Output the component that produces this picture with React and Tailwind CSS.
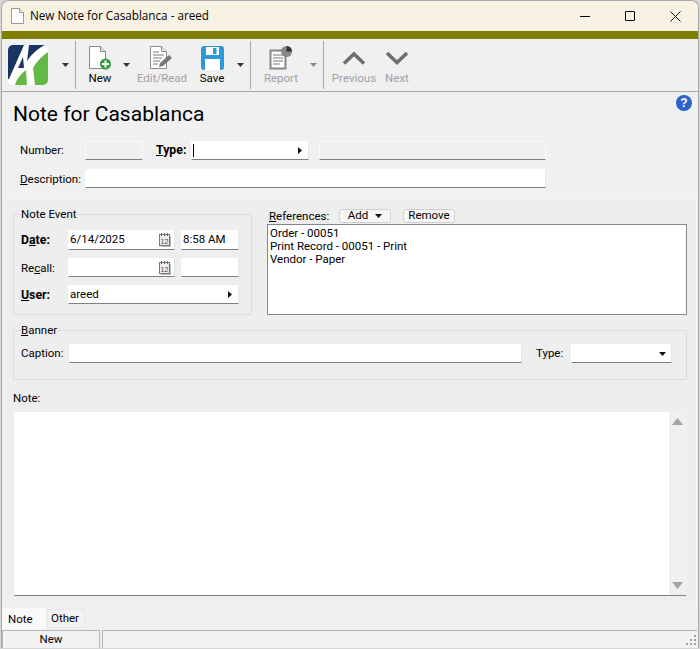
const Caret = ({ color = '#333' }) => (
  <svg width="7" height="4" viewBox="0 0 7 4">
    <path d="M0 0h7L3.500 4z" fill={color} />
  </svg>
);

const RightCaret = () => (
  <svg width="4" height="7" viewBox="0 0 4 7">
    <path d="M0 0l4 3.500L0 7z" fill="#111" />
  </svg>
);

const Logo = () => (
  <svg width="40" height="40" viewBox="0 0 40 40">
    <clipPath id="logoClip">
      <rect width="40" height="40" rx="5" />
    </clipPath>
    <g clipPath="url(#logoClip)">
      <rect width="40" height="40" fill="#fff" />
      <path d="M0 0h16L1 34H0z" fill="#1c3461" />
      <path d="M21 0h16C29 4 24 9 19 16z" fill="#1c3461" />
      <path d="M10 23l5-11 1 11z" fill="#1c3461" />
      <path d="M40 7C33 12 28 17 25 23l2 17h13z" fill="#63b946" />
      <path d="M7 40c2-7 6-11 11-15l1 15z" fill="#63b946" />
    </g>
  </svg>
);

const NewIcon = () => (
  <svg width="24" height="26" viewBox="0 0 24 26">
    <path d="M1.500 1.500h11l5 5v17h-16z" fill="#fff" stroke="#8a8a8a" />
    <path d="M12.500 1.500v5h5" fill="#e8e8e8" stroke="#8a8a8a" />
    <circle cx="17.500" cy="19" r="5.500" fill="#2f9e44" />
    <path d="M17.500 15.500v7M14 19h7" stroke="#fff" strokeWidth="2" />
  </svg>
);

const EditIcon = () => (
  <svg width="26" height="26" viewBox="0 0 26 26">
    <path d="M1.500 1.500h11l5 5v17h-16z" fill="#fff" stroke="#8a8a8a" />
    <path d="M12.500 1.500v5h5" fill="#eee" stroke="#8a8a8a" />
    <path d="M4 7h6M4 10h11M4 13h9M4 16h7M4 19h5" stroke="#777" />
    <path d="M10 22l1-4 9-8 3 3-9 8z" fill="#777" />
  </svg>
);

const SaveIcon = () => (
  <svg width="23" height="24" viewBox="0 0 23 24">
    <rect width="23" height="24" rx="3" fill="#2a9ad9" />
    <rect x="5" y="1" width="13" height="8" fill="#fff" />
    <rect x="12" y="2" width="3.500" height="6" fill="#2a9ad9" />
    <rect x="4" y="13" width="15" height="11" fill="#fff" />
  </svg>
);

const ReportIcon = () => (
  <svg width="25" height="26" viewBox="0 0 25 26">
    <rect x="1.500" y="5.500" width="15" height="18" fill="#fff" stroke="#888" strokeWidth="2" />
    <path d="M4 10h10M4 13h10M4 16h10M4 19h7" stroke="#777" />
    <circle cx="17.500" cy="6.500" r="5.500" fill="#888" />
    <path d="M17.500 1a5.500 5.500 0 0 1 5.500 5.500h-5.500z" fill="#333" />
  </svg>
);

const Chevron = ({ up }) => (
  <svg width="24" height="14" viewBox="0 0 24 14">
    <path d={up ? 'M2 12.500L12 3l10 9.500' : 'M2 2l10 9.500L22 2'} fill="none" stroke="#6e6e6e" strokeWidth="3.500" />
  </svg>
);

const CalendarIcon = () => (
  <svg width="12" height="14" viewBox="0 0 12 14" className="shrink-0">
    <rect x="0.500" y="1.500" width="10" height="11" fill="#eee" stroke="#777" />
    <path d="M2.500 0v3M5.500 0v3M8.500 0v3" stroke="#666" />
    <path d="M11.500 3v10.500H2" fill="none" stroke="#bbb" />
    <text x="5.500" y="11" textAnchor="middle" fontSize="7" fill="#444" fontFamily="Liberation Sans">12</text>
  </svg>
);

const ToolButton = ({ icon, label, width, className = '', disabled }) => (
  <div className={`flex flex-col items-center pt-[6px] ${className}`} style={{ width }}>
    <div className="h-[26px] flex items-center justify-center">{icon}</div>
    <div className={`h-[14px] leading-[14px] whitespace-nowrap ${disabled ? 'text-[#a0a0a0]' : 'text-black'}`}>{label}</div>
  </div>
);

const ToolCaret = ({ className = '', color }) => (
  <div className={`w-[12px] pt-[24px] flex justify-center ${className}`}>
    <Caret color={color} />
  </div>
);

const Divider = ({ className = '' }) => <div className={`w-px h-[48px] mt-[2px] bg-[#a8a8a8] ${className}`} />;

const Field = ({ children, className = '', readOnly }) => (
  <div
    className={`flex items-center pl-px pr-[2px] border-t border-l border-r border-b ${readOnly ? 'bg-[#f0f0f0] border-t-[#f8f8f8] border-l-[#f8f8f8] border-r-[#f8f8f8]' : 'bg-white border-t-white border-l-white border-r-[#e6e6e6]'} border-b-[#808080] ${className}`}
  >
    {children}
  </div>
);

const Label = ({ children, className = '' }) => (
  <div className={`leading-[14px] whitespace-nowrap ${className}`}>{children}</div>
);

export default function App() {
  return (
    <div className="w-[700px] h-[649px] pl-px bg-[#d6d6d6] overflow-hidden font-['Roboto',sans-serif] text-[11.5px] text-black">
      <div className="w-[698px] h-[648px] flex flex-col border-t border-l border-r border-[#a9a9a9] rounded-t-lg overflow-hidden bg-[#f0f0f0]">
        {/* title bar */}
        <div className="h-[30px] shrink-0 flex items-center bg-[#f8f2e4]">
          <svg width="13" height="16" viewBox="0 0 13 16" className="ml-[9px]">
            <path d="M.5.500h8l4 4v11H.5z" fill="#fff" stroke="#999" />
            <path d="M8.500.500v4h4" fill="#eee" stroke="#999" />
          </svg>
          <div className="ml-[6px] text-[11.7px] font-['Open_Sans',sans-serif]">New Note for Casablanca - areed</div>
          <div className="ml-auto flex items-center gap-[35px] pr-[17px]">
            <div className="w-[10px] h-px bg-black" />
            <div className="w-[10px] h-[10px] border border-black rounded-[1px]" />
            <svg width="11" height="11" viewBox="0 0 11 11">
              <path d="M.5.500l10 10M10.500.500l-10 10" stroke="#111" />
            </svg>
          </div>
        </div>
        <div className="h-[8px] shrink-0 bg-[#808000]" />

        {/* toolbar */}
        <div className="h-[53px] shrink-0 flex border-b border-[#a8a8a8] bg-[#f0f0f0]">
          <div className="ml-[6px] mt-[6px]">
            <Logo />
          </div>
          <ToolCaret className="ml-[11px]" />
          <Divider className="ml-[4px]" />
          <ToolButton icon={<NewIcon />} label="New" width={40} className="ml-[4px]" />
          <ToolCaret />
          <ToolButton icon={<EditIcon />} label="Edit/Read" width={48} className="ml-[6px]" disabled />
          <ToolButton icon={<SaveIcon />} label="Save" width={40} className="ml-[6px]" />
          <ToolCaret className="ml-[2px]" />
          <Divider className="ml-[4px]" />
          <ToolButton icon={<ReportIcon />} label="Report" width={40} className="ml-[10px]" disabled />
          <ToolCaret className="ml-[6px]" color="#888" />
          <Divider className="ml-[4px]" />
          <ToolButton icon={<Chevron up />} label="Previous" width={50} className="ml-[5px]" disabled />
          <ToolButton icon={<Chevron />} label="Next" width={36} disabled />
        </div>

        {/* header */}
        <div className="relative h-[106px] shrink-0 pl-[11px]">
          <svg width="16" height="16" viewBox="0 0 16 16" className="absolute top-[3px] right-[6px]">
            <circle cx="8" cy="8" r="8" fill="#2a62c9" />
            <text x="8" y="12" textAnchor="middle" fontSize="12" fontWeight="bold" fill="#fff" fontFamily="Liberation Sans">?</text>
          </svg>
          <div className="pt-[7px] h-[49px] text-[21px] leading-[30px]">Note for Casablanca</div>
          <div className="flex items-center h-[19px] pl-[7px]">
            <Label className="w-[65px] pb-[2px]">Number:</Label>
            <Field className="w-[58px] h-[19px]" readOnly />
            <Label className="w-[48px] pl-[13px] pb-[2px] font-bold text-[12.3px]"><u>T</u>ype:</Label>
            <Field className="w-[118px] h-[19px]">
              <div className="w-px h-[13px] bg-black" />
              <div className="ml-auto pr-[4px]"><RightCaret /></div>
            </Field>
            <Field className="w-[227px] h-[19px] ml-[10px]" readOnly />
          </div>
          <div className="flex items-center h-[19px] pl-[7px] mt-[9px]">
            <Label className="w-[65px]"><u>D</u>escription:</Label>
            <Field className="w-[461px] h-[19px]" />
          </div>
        </div>

        {/* tab panel */}
        <div className="h-[409px] shrink-0 w-[695px] pt-[8px] pl-[11px] bg-[#eeeeee] border-t border-r border-[#f8f8f8]">
          <div className="flex h-[108px]">
            <fieldset className="w-[239px] h-[108px] px-[7px] border border-[#dcdcdc]">
              <legend className="p-0 leading-[14px]">Note Event</legend>
              <div className="flex items-center h-[20px] mt-[9px]">
                <Label className="w-[47px] font-bold text-[12.3px]">D<u>a</u>te:</Label>
                <Field className="w-[107px] h-[20px]">
                  6/14/2025
                  <div className="ml-auto pr-[1px]"><CalendarIcon /></div>
                </Field>
                <Field className="w-[58px] h-[20px] ml-[6px]">8:58 AM</Field>
              </div>
              <div className="flex items-center h-[19px] mt-[8px]">
                <Label className="w-[47px]">Re<u>c</u>all:</Label>
                <Field className="w-[107px] h-[19px]">
                  <div className="ml-auto pr-[1px]"><CalendarIcon /></div>
                </Field>
                <Field className="w-[58px] h-[19px] ml-[6px]" />
              </div>
              <div className="flex items-center h-[19px] mt-[8px]">
                <Label className="w-[47px] font-bold text-[12.3px]"><u>U</u>ser:</Label>
                <Field className="w-[171px] h-[19px]">
                  areed
                  <div className="ml-auto pr-[4px]"><RightCaret /></div>
                </Field>
              </div>
            </fieldset>
            <div className="w-[420px] ml-[15px] pt-[1px] flex flex-col">
              <div className="flex items-center h-[15px] pl-[2px]">
                <Label className="w-[70px]"><u>R</u>eferences:</Label>
                <button className="w-[52px] h-[14px] flex items-center justify-center gap-[7px] border border-[#cfcfcf] rounded-[3px] bg-[#f6f6f6] leading-none">
                  Add <Caret color="#111" />
                </button>
                <button className="w-[52px] h-[14px] ml-[12px] flex items-center justify-center border border-[#cfcfcf] rounded-[3px] bg-[#f6f6f6] leading-none">
                  Remove
                </button>
              </div>
              <div className="flex-1 mt-px pl-[2px] pt-[2px] bg-white border border-[#82878c] leading-[13px]">
                <div>Order - 00051</div>
                <div>Print Record - 00051 - Print</div>
                <div>Vendor - Paper</div>
              </div>
            </div>
          </div>

          <fieldset className="w-[674px] h-[57px] mt-[8px] px-[7px] border border-[#dcdcdc]">
            <legend className="p-0 leading-[14px]"><u>B</u>anner</legend>
            <div className="flex items-center h-[19px] mt-[7px]">
              <Label className="w-[48px] pb-[2px]">Caption:</Label>
              <Field className="w-[453px] h-[19px]" />
              <Label className="w-[35px] ml-[14px] pb-[2px]">Type:</Label>
              <Field className="w-[101px] h-[19px]">
                <div className="ml-auto pr-[3px]"><Caret color="#111" /></div>
              </Field>
            </div>
          </fieldset>

          <Label className="mt-[11px]">Note:</Label>
          <div className="flex justify-between w-[672px] h-[184px] mt-[7px] ml-px bg-white border-b border-b-[#808080]">
            <div className="flex-1" />
            <div className="w-[17px] flex flex-col justify-between items-center py-[6px] bg-[#f0f0f0]">
              <svg width="11" height="7" viewBox="0 0 11 7"><path d="M5.500 0L11 7H0z" fill="#a3a3a3" /></svg>
              <svg width="11" height="7" viewBox="0 0 11 7"><path d="M0 0h11L5.500 7z" fill="#a3a3a3" /></svg>
            </div>
          </div>
        </div>

        {/* tabs */}
        <div className="h-[23px] shrink-0 flex items-start">
          <div className="w-[44px] h-[22px] mt-px pl-[6px] pt-[4px] leading-[14px] bg-[#f9f9f9]">Note</div>
          <div className="w-[38px] h-[19px] mt-[2px] ml-px pl-[3px] pt-[1px] leading-[14px] bg-[#f3f3f3] border border-[#e8e8e8]">Other</div>
        </div>

        {/* status bar */}
        <div className="flex-1 flex gap-[2px]">
          <div className="w-[98px] flex items-center justify-center border-t border-l border-r border-[#b5b5b5] bg-[#f2f2f2]">New</div>
          <div className="relative w-[595px] border-t border-l border-[#b5b5b5] bg-[#f2f2f2]">
            <svg width="11" height="11" viewBox="0 0 11 11" className="absolute right-0 bottom-[2px]">
              <path d="M8 0h2v2H8zM4 4h2v2H4zM8 4h2v2H8zM0 8h2v2H0zM4 8h2v2H4zM8 8h2v2H8z" fill="#a0a0a0" />
            </svg>
          </div>
        </div>
      </div>
    </div>
  );
}
